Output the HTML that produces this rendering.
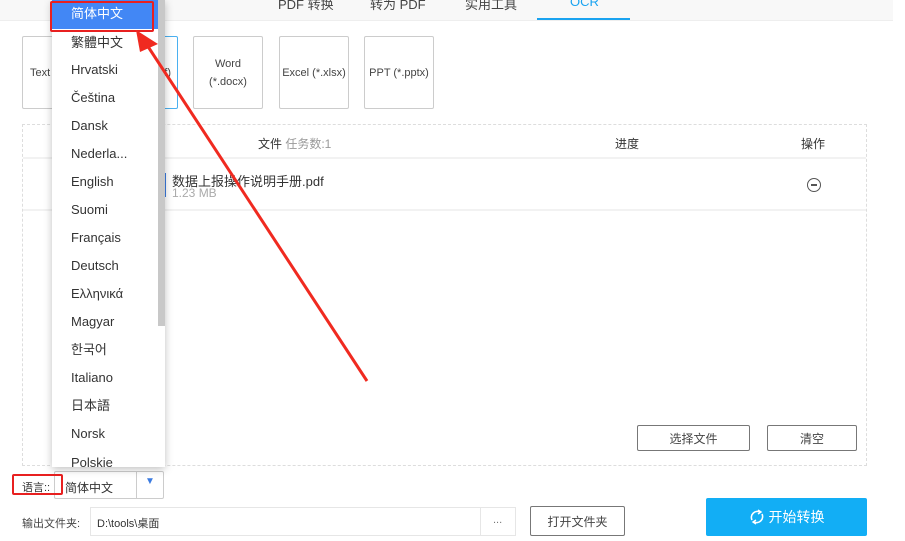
<!DOCTYPE html>
<html><head><meta charset="utf-8"><style>
*{margin:0;padding:0;box-sizing:border-box}
body{width:905px;height:541px;background:#fff;position:relative;overflow:hidden;font-family:"Liberation Sans","Noto Sans CJK SC",sans-serif;color:#333}
.a{position:absolute}
.hdr{left:0;top:0;width:893px;height:21px;background:#f8f8f8;border-bottom:1px solid #eee}
.tab{top:-6px;font-size:13px;color:#444}
.card{border:1px solid #ccc;border-radius:2px;font-size:11px;color:#444;text-align:center;display:flex;align-items:center;justify-content:center;line-height:18px;background:#fff}
.btn{border:1px solid #777;border-radius:2px;font-size:12px;color:#444;display:flex;align-items:center;justify-content:center;background:#fff}
.dd{left:52px;top:0;width:113px;height:467px;background:#fff;box-shadow:0 2px 8px rgba(0,0,0,.25);overflow:hidden}
.it{position:absolute;left:19px;font-size:13px;color:#333;line-height:16px;height:16px}
</style></head><body>
<div class="a hdr"></div>
<div class="a tab" style="left:278px">PDF 转换</div>
<div class="a tab" style="left:370px">转为 PDF</div>
<div class="a tab" style="left:465px">实用工具</div>
<div class="a tab" style="left:570px;color:#1aa3f0">OCR</div>
<div class="a" style="left:537px;top:18px;width:93px;height:2px;background:#1aa3f0"></div>

<div class="a card" style="left:22px;top:36px;width:69px;height:73px;justify-content:flex-start;padding-left:7px">Text</div>
<div class="a card" style="left:100px;top:36px;width:78px;height:73px;border-color:#4ab0f0;justify-content:flex-end;padding-right:6px">f)</div>
<div class="a card" style="left:193px;top:36px;width:70px;height:73px">Word<br>(*.docx)</div>
<div class="a card" style="left:279px;top:36px;width:70px;height:73px">Excel (*.xlsx)</div>
<div class="a card" style="left:364px;top:36px;width:70px;height:73px">PPT (*.pptx)</div>

<div class="a" style="left:22px;top:124px;width:845px;height:342px;border:1px dashed #ddd"></div>
<div class="a" style="left:23px;top:157px;width:843px;height:2px;background:#f2f2f2"></div>
<div class="a" style="left:23px;top:209px;width:843px;height:2px;background:#f2f2f2"></div>
<div class="a" style="left:258px;top:135px;font-size:12px">文件 <span style="color:#999">任务数:1</span></div>
<div class="a" style="left:615px;top:135px;font-size:12px">进度</div>
<div class="a" style="left:801px;top:135px;font-size:12px">操作</div>
<div class="a" style="left:163px;top:173px;width:3px;height:24px;background:#3b7be0"></div>
<div class="a" style="left:172px;top:171px;font-size:13px">数据上报操作说明手册.pdf</div>
<div class="a" style="left:172px;top:186px;font-size:12px;color:#aaa">1.23 MB</div>
<div class="a" style="left:807px;top:178px;width:14px;height:14px;border:1.3px solid #555;border-radius:50%"></div>
<div class="a" style="left:811px;top:184px;width:6px;height:1.5px;background:#555"></div>

<div class="a btn" style="left:637px;top:425px;width:113px;height:26px">选择文件</div>
<div class="a btn" style="left:767px;top:425px;width:90px;height:26px">清空</div>

<div class="a" style="left:54px;top:471px;width:110px;height:28px;border:1px solid #ccc;border-radius:2px;font-size:12px;padding:7px 0 0 10px">简体中文</div>
<div class="a" style="left:136px;top:472px;width:1px;height:26px;background:#ccc"></div>
<div class="a" style="left:145px;top:476px;font-size:10px;color:#3b7be0">▼</div>
<div class="a" style="left:22px;top:479px;font-size:11px">语言::</div>
<div class="a" style="left:12px;top:474px;width:51px;height:21px;border:2px solid #e82020;border-radius:2px"></div>

<div class="a" style="left:22px;top:515px;font-size:11px;color:#444">输出文件夹:</div>
<div class="a" style="left:90px;top:507px;width:426px;height:29px;border:1px solid #e6e6e6;font-size:11px;padding:7px 0 0 6px">D:\tools\桌面</div>
<div class="a" style="left:480px;top:507px;width:1px;height:29px;background:#e6e6e6"></div>
<div class="a" style="left:493px;top:514px;font-size:11px;color:#777">...</div>
<div class="a btn" style="left:530px;top:506px;width:95px;height:30px">打开文件夹</div>
<div class="a" style="left:706px;top:498px;width:161px;height:38px;background:#12aef5;border-radius:2px;color:#fff;font-size:14px;display:flex;align-items:center;justify-content:center">
<svg width="16" height="18" viewBox="0 0 16 18" style="margin-right:4px"><path d="M3 12 A6 6 0 0 1 11 4 M13 6 A6 6 0 0 1 5 14" fill="none" stroke="#fff" stroke-width="1.6"/><path d="M9 2 L12 4 L9 6 M7 12 L4 14 L7 16" fill="none" stroke="#fff" stroke-width="1.4"/></svg>开始转换</div>

<div class="a dd">
<div class="a" style="left:106px;top:0;width:7px;height:326px;background:#c8c8c8"></div>
<div class="a" style="left:0;top:0;width:106px;height:29px;background:#4287f5"></div>
<div class="it" style="top:6px;color:#fff">简体中文</div>
<div class="it" style="top:35px">繁體中文</div>
<div class="it" style="top:62px">Hrvatski</div>
<div class="it" style="top:90px">Čeština</div>
<div class="it" style="top:118px">Dansk</div>
<div class="it" style="top:146px">Nederla...</div>
<div class="it" style="top:174px">English</div>
<div class="it" style="top:202px">Suomi</div>
<div class="it" style="top:230px">Français</div>
<div class="it" style="top:258px">Deutsch</div>
<div class="it" style="top:286px">Ελληνικά</div>
<div class="it" style="top:314px">Magyar</div>
<div class="it" style="top:342px">한국어</div>
<div class="it" style="top:370px">Italiano</div>
<div class="it" style="top:398px">日本語</div>
<div class="it" style="top:426px">Norsk</div>
<div class="it" style="top:455px">Polskie</div>
</div>
<div class="a" style="left:50px;top:1px;width:104px;height:31px;border:2px solid #e82020;border-radius:2px"></div>
<svg class="a" style="left:0;top:0" width="905" height="541"><line x1="367" y1="381" x2="147" y2="45" stroke="#f02a20" stroke-width="3"/><polygon points="136,30 158,44 140,52" fill="#f02a20"/></svg>
</body></html>
